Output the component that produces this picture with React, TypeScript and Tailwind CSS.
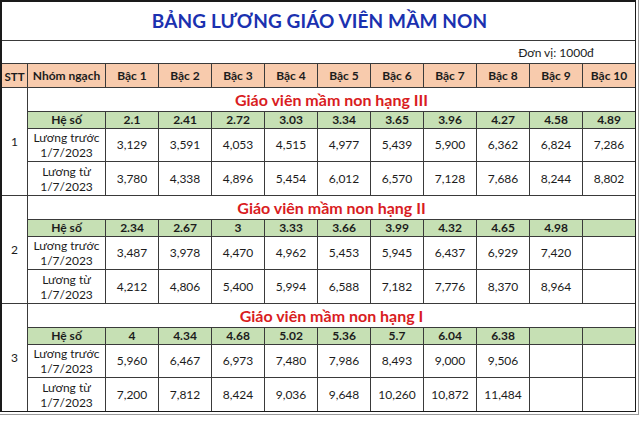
import React from "react";

type Group = {
  name: string;
  heso: string[];
  truoc: string[];
  tu: string[];
};

const groups: Group[] = [
  {
    name: "Giáo viên mầm non hạng III",
    heso: ["2.1", "2.41", "2.72", "3.03", "3.34", "3.65", "3.96", "4.27", "4.58", "4.89"],
    truoc: ["3,129", "3,591", "4,053", "4,515", "4,977", "5,439", "5,900", "6,362", "6,824", "7,286"],
    tu: ["3,780", "4,338", "4,896", "5,454", "6,012", "6,570", "7,128", "7,686", "8,244", "8,802"],
  },
  {
    name: "Giáo viên mầm non hạng II",
    heso: ["2.34", "2.67", "3", "3.33", "3.66", "3.99", "4.32", "4.65", "4.98", ""],
    truoc: ["3,487", "3,978", "4,470", "4,962", "5,453", "5,945", "6,437", "6,929", "7,420", ""],
    tu: ["4,212", "4,806", "5,400", "5,994", "6,588", "7,182", "7,776", "8,370", "8,964", ""],
  },
  {
    name: "Giáo viên mầm non hạng I",
    heso: ["4", "4.34", "4.68", "5.02", "5.36", "5.7", "6.04", "6.38", "", ""],
    truoc: ["5,960", "6,467", "6,973", "7,480", "7,986", "8,493", "9,000", "9,506", "", ""],
    tu: ["7,200", "7,812", "8,424", "9,036", "9,648", "10,260", "10,872", "11,484", "", ""],
  },
];

const bac = ["Bậc 1", "Bậc 2", "Bậc 3", "Bậc 4", "Bậc 5", "Bậc 6", "Bậc 7", "Bậc 8", "Bậc 9", "Bậc 10"];

const cell = "flex items-center justify-center text-center leading-[14px]";

export default function App() {
  return (
    <div className="w-[640px] h-[422px] bg-white" style={{ fontFamily: "Lato, 'Noto Sans', sans-serif" }}>
      <div className="w-[639px] pr-px pb-[2px] border-r border-b border-[#9a9a9a]">
        <div className="grid grid-cols-[25px_77px_repeat(10,52px)] grid-rows-[38px_22px_23px_repeat(3,23px_16px_32px_33px)] gap-px bg-[#3a3a3a] border-t-2 border-l-2 border-r border-b border-[#1a1a1a] w-[636px] text-[#1c1c1c]">
          <div className="col-span-12 bg-white flex items-center justify-center pl-[2px]">
            <span className="text-[19px] font-bold text-[#1b31b0] tracking-[0.1px]">BẢNG LƯƠNG GIÁO VIÊN MẦM NON</span>
          </div>
          <div className="col-span-12 bg-white grid grid-cols-[25px_77px_repeat(10,52px)] gap-px">
            <div className="col-start-11 flex items-end justify-center pb-[1px]">
              <span className="text-[12px] whitespace-nowrap">Đơn vị: 1000đ</span>
            </div>
          </div>
          <div className={`${cell} bg-[#f8cbad] font-bold text-[11.5px] pt-[3px]`}>STT</div>
          <div className={`${cell} bg-[#f8cbad] font-bold text-[12px]`}>Nhóm ngạch</div>
          {bac.map((b) => (
            <div key={b} className={`${cell} bg-[#f8cbad] font-bold text-[12px]`}>
              {b}
            </div>
          ))}
          {groups.map((g, gi) => (
            <React.Fragment key={g.name}>
              <div className={`${cell} row-span-4 bg-white text-[12px]`}>{gi + 1}</div>
              <div className="col-span-11 bg-white flex items-center justify-center">
                <span className="text-[16px] font-bold text-[#d91c22]">{g.name}</span>
              </div>
              <div className={`${cell} bg-[#c6e0b4] font-bold text-[12px]`}>Hệ số</div>
              {g.heso.map((v, i) => (
                <div key={"h" + i} className={`${cell} bg-[#c6e0b4] font-bold text-[12px]`}>
                  {v}
                </div>
              ))}
              <div className={`${cell} bg-white text-[12px] flex-col !leading-[15px]`}>
                <span>Lương trước</span>
                <span>1/7/2023</span>
              </div>
              {g.truoc.map((v, i) => (
                <div key={"t" + i} className={`${cell} bg-white text-[12px]`}>
                  {v}
                </div>
              ))}
              <div className={`${cell} bg-white text-[12px] flex-col !leading-[15px]`}>
                <span>Lương từ</span>
                <span>1/7/2023</span>
              </div>
              {g.tu.map((v, i) => (
                <div key={"u" + i} className={`${cell} bg-white text-[12px]`}>
                  {v}
                </div>
              ))}
            </React.Fragment>
          ))}
        </div>
      </div>
    </div>
  );
}
